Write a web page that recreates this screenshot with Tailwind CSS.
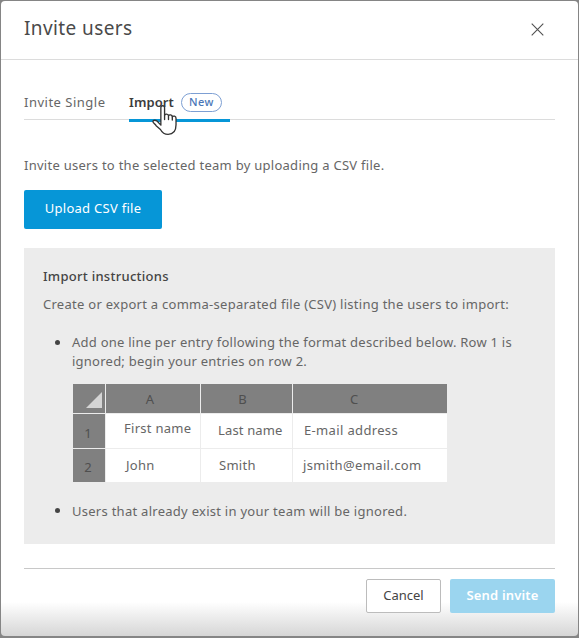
<!DOCTYPE html>
<html lang="en">
<head>
    <meta charset="UTF-8">
    <meta name="viewport" content="width=device-width, initial-scale=1.0">
    <title>Invite users</title>
    <script src="https://cdn.jsdelivr.net/npm/@tailwindcss/browser@4"></script>
</head>
<body class="bg-[#858585] font-['Noto_Sans',sans-serif] text-[13px] tracking-[0.27px] text-[#666]">

    <!-- Modal -->
    <div class="relative flex h-[638px] w-[579px] flex-col overflow-hidden border border-b-2 border-[#858585] bg-[#858585]">
        <div class="flex grow flex-col rounded-[4px] bg-white bg-linear-to-t from-[#d6d6d6] to-white to-[34px]">

            <!-- Header -->
            <header class="flex h-[59px] items-center justify-between border-b border-[#dcdcdc] pr-[34px] pl-[23px]">
                <h1 class="-mt-1 text-[19px] leading-6 tracking-[0.4px] text-[#4a4a4a]">Invite users</h1>
                <button type="button" aria-label="Close" class="-mt-0.5">
                    <svg class="block size-[13px]" viewBox="0 0 13 13" fill="none" stroke="#505050" stroke-width="1.1">
                        <path d="M.7.7l11.6 11.6M12.3.7L.7 12.3" />
                    </svg>
                </button>
            </header>

            <main class="px-[23px] pt-[25px]">
                <!-- Tabs -->
                <nav class="flex h-[35px] border-b border-[#dcdcdc]">
                    <a href="#" class="mr-6 h-[34px] w-[81px] pt-[7px] leading-5 tracking-[0.5px] whitespace-nowrap">Invite Single</a>
                    <a href="#" class="relative flex h-[37px] w-[101px] border-b-[3px] border-[#0696d7] pt-[7px] text-[#3c3c3c]">
                        <span class="w-[52px] leading-5 font-semibold tracking-[0.1px]">Import</span>
                        <span class="mt-px flex h-[19px] w-[41px] items-center justify-center rounded-full border border-[#7d9fd3] text-[11px] font-medium tracking-[0.5px] text-[#4a77b8]">New</span>
                        <svg class="absolute top-[19px] left-[23px] h-[33px] w-[27px]" viewBox="0 0 26 32" fill="#fff" stroke="#333" stroke-width="1.3" stroke-linejoin="round" stroke-linecap="round">
                            <path d="M8.5 17V3.500c0-2.400 3.600-2.400 3.600 0V11c.4-1.800 3.700-1.600 3.800.4.8-1.500 3.500-1 3.700.9 1-1.100 3.600-.6 3.600 1.400v6.500c0 6-2.800 9.300-7.700 9.300-4 0-5.800-1.800-7.400-4.800L3.900 21c-1-1.600-3.200-2.800-3.100-4 .2-1.600 2.700-1.600 4.200-.2l3.500 3.700z" />
                            <path d="M12.100 11v4M15.900 11.500v3.500M19.600 12.500v3" />
                        </svg>
                    </a>
                </nav>

                <p class="mt-[35px] leading-5 whitespace-nowrap">Invite users to the selected team by uploading a CSV file.</p>
                <button type="button" class="mt-[15px] block h-[39px] w-[138px] rounded-[2px] bg-[#0696d7] pb-0.5 text-white">Upload CSV file</button>

                <!-- Instructions -->
                <section class="mt-[19px] h-[296px] bg-[#ececec] px-[19px] pt-[18px]">
                    <h2 class="leading-5 font-medium text-[#444]">Import instructions</h2>
                    <p class="mt-2 leading-5 whitespace-nowrap">Create or export a comma-separated file (CSV) listing the users to import:</p>
                    <ul class="mt-[19px]">
                        <li class="flex">
                            <span class="mt-[7px] mr-3 ml-3 size-[5px] shrink-0 rounded-full bg-[#444]"></span>
                            <div>
                                <p class="leading-[19px] tracking-[0.24px] whitespace-nowrap">Add one line per entry following the format described below. Row 1 is<br>ignored; begin your entries on row 2.</p>
                                <div class="mt-[13px] ml-[1px] grid w-[374px] grid-cols-[32px_94px_91px_154px] grid-rows-[29px_34px_33px] gap-px bg-[#ececec]">
                                    <div class="flex items-end justify-end bg-[#808080] pr-[3px] pb-[5px]">
                                        <svg class="block size-4" viewBox="0 0 16 16" fill="#d4d4d4"><path d="M16 0v16H0z" /></svg>
                                    </div>
                                    <div class="bg-[#808080] pt-[5px] pr-1.5 text-center leading-5 text-[#4f4f4f]">A</div>
                                    <div class="bg-[#808080] pt-[5px] pr-2 text-center leading-5 text-[#4f4f4f]">B</div>
                                    <div class="bg-[#808080] pt-[5px] pl-[57px] leading-5 text-[#4f4f4f]">C</div>
                                    <div class="bg-[#808080] pt-[9px] pr-0.5 text-center leading-5 text-[#4f4f4f]">1</div>
                                    <div class="bg-white pt-1 pl-[18px] leading-5 whitespace-nowrap">First name</div>
                                    <div class="bg-white pt-1.5 pl-[17px] leading-5 tracking-[0.15px] whitespace-nowrap">Last name</div>
                                    <div class="bg-white pt-1.5 pl-[11px] leading-5 tracking-[0.35px] whitespace-nowrap">E-mail address</div>
                                    <div class="bg-[#808080] pt-2 pr-0.5 text-center leading-5 text-[#4f4f4f]">2</div>
                                    <div class="bg-white pt-1.5 pl-5 leading-5">John</div>
                                    <div class="bg-white pt-1.5 pl-[18px] leading-5">Smith</div>
                                    <div class="bg-white pt-1.5 pl-2.5 leading-5 tracking-[0.36px]">jsmith@email.com</div>
                                </div>
                            </div>
                        </li>
                        <li class="mt-[19px] flex">
                            <span class="mt-[7px] mr-3 ml-3 size-[5px] shrink-0 rounded-full bg-[#444]"></span>
                            <p class="leading-5 whitespace-nowrap">Users that already exist in your team will be ignored.</p>
                        </li>
                    </ul>
                </section>
            </main>

            <!-- Footer -->
            <footer class="mx-[23px] mt-6 flex justify-end gap-[9px] border-t border-[#c8c8c8] pt-[10px]">
                <button type="button" class="h-[34px] w-[75px] rounded-[2px] border border-[#bcbcbc] bg-white tracking-normal text-[#444]">Cancel</button>
                <button type="button" class="h-[34px] w-[105px] rounded-[2px] bg-[#9bd5ef] font-semibold tracking-[0.15px] text-white">Send invite</button>
            </footer>
        </div>
    </div>

</body>
</html>
